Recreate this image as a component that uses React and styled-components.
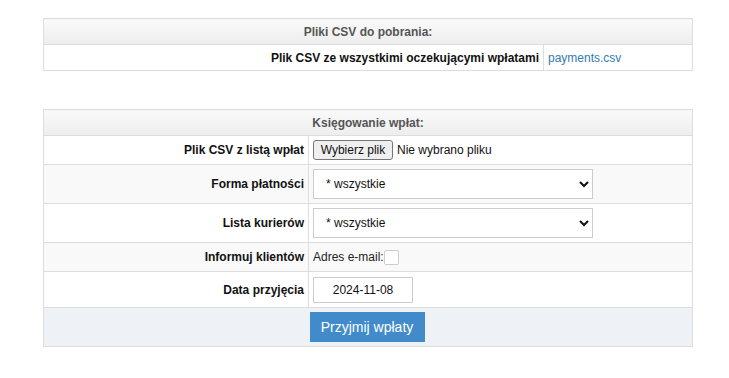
import React, { useState } from 'react';
import styled, { createGlobalStyle } from 'styled-components';

const GlobalStyle = createGlobalStyle`
  body {
    margin: 0;
    background: #ffffff;
    font-family: 'Liberation Sans', Arial, sans-serif;
    font-size: 12px;
    color: #222;
  }
`;

const Page = styled.div`
  padding: 18px 0 0 43px;
  display: flex;
  flex-direction: column;
  gap: 38px;
`;

const Table = styled.table`
  width: 650px;
  border-collapse: collapse;
  table-layout: fixed;
  border: 1px solid #ddd;
`;

const HeadCell = styled.th`
  height: 25px;
  padding: 0;
  border: 1px solid #ddd;
  background: linear-gradient(to bottom, #fafafa 0%, #ededed 100%);
  color: #555;
  font-weight: bold;
  font-size: 12px;
  text-align: center;
`;

const Row = styled.tr`
  height: ${(p) => p.$h}px;
  background: ${(p) => (p.$striped ? '#f9f9f9' : '#ffffff')};
`;

const Label = styled.td`
  padding: 0 4px 0 0;
  border: 1px solid #ddd;
  text-align: right;
  font-weight: bold;
  color: #111;
  vertical-align: middle;
`;

const Value = styled.td`
  padding: 0 0 0 4px;
  border: 1px solid #ddd;
  text-align: left;
  vertical-align: middle;
`;

const Link = styled.a`
  color: #337ab7;
  text-decoration: none;
`;

const FileRow = styled.div`
  display: flex;
  align-items: center;
  gap: 4px;
  font-size: 12px;
  color: #111;
`;

const FileButton = styled.button`
  width: 80px;
  height: 20px;
  padding: 0;
  background: #efefef;
  border: 1px solid #767676;
  border-radius: 3px;
  font-family: 'Liberation Sans', Arial, sans-serif;
  font-size: 12px;
  color: #111;
`;

const Select = styled.select`
  width: 280px;
  height: 30px;
  padding: 0 8px;
  border: 1px solid #ccc;
  border-radius: 0;
  background: #fff;
  font-family: 'Liberation Sans', Arial, sans-serif;
  font-size: 12px;
  color: #111;
`;

const Inline = styled.label`
  display: flex;
  align-items: center;
  font-size: 12px;
`;

const Check = styled.span`
  width: 13px;
  height: 13px;
  border: 1px solid #ccc;
  border-radius: 2px;
  background: #fff;
`;

const DateInput = styled.input`
  box-sizing: border-box;
  width: 100px;
  height: 26px;
  border: 1px solid #ccc;
  text-align: center;
  font-family: 'Liberation Sans', Arial, sans-serif;
  font-size: 12px;
  color: #111;
`;

const FooterRow = styled.tr`
  height: 39px;
  background: #eef1f6;
`;

const FooterCell = styled.td`
  padding: 0 0 0 ${(p) => p.$pad || 0}px;
  border-top: 1px solid #ddd;
  vertical-align: middle;
`;

const Submit = styled.button`
  width: 115px;
  height: 30px;
  border: none;
  background: #428bca;
  color: #fff;
  font-family: 'Liberation Sans', Arial, sans-serif;
  font-size: 14px;
`;

export default function App() {
  const [date, setDate] = useState('2024-11-08');

  return (
    <>
      <GlobalStyle />
      <Page>
        <Table>
          <colgroup>
            <col style={{ width: 500 }} />
            <col />
          </colgroup>
          <thead>
            <tr>
              <HeadCell colSpan={2}>Pliki CSV do pobrania:</HeadCell>
            </tr>
          </thead>
          <tbody>
            <Row $h={26}>
              <Label>Plik CSV ze wszystkimi oczekującymi wpłatami</Label>
              <Value>
                <Link href="#">payments.csv</Link>
              </Value>
            </Row>
          </tbody>
        </Table>

        <Table>
          <colgroup>
            <col style={{ width: 265 }} />
            <col />
          </colgroup>
          <thead>
            <tr>
              <HeadCell colSpan={2}>Księgowanie wpłat:</HeadCell>
            </tr>
          </thead>
          <tbody>
            <Row $h={29}>
              <Label>Plik CSV z listą wpłat</Label>
              <Value>
                <FileRow>
                  <FileButton type="button">Wybierz plik</FileButton>
                  <span>Nie wybrano pliku</span>
                </FileRow>
              </Value>
            </Row>
            <Row $h={39} $striped>
              <Label>Forma płatności</Label>
              <Value>
                <Select defaultValue="all">
                  <option value="all">* wszystkie</option>
                </Select>
              </Value>
            </Row>
            <Row $h={39}>
              <Label>Lista kurierów</Label>
              <Value>
                <Select defaultValue="all">
                  <option value="all">* wszystkie</option>
                </Select>
              </Value>
            </Row>
            <Row $h={29} $striped>
              <Label>Informuj klientów</Label>
              <Value>
                <Inline>
                  Adres e-mail:
                  <Check />
                </Inline>
              </Value>
            </Row>
            <Row $h={36}>
              <Label>Data przyjęcia</Label>
              <Value>
                <DateInput value={date} onChange={(e) => setDate(e.target.value)} />
              </Value>
            </Row>
            <FooterRow>
              <FooterCell />
              <FooterCell $pad={1}>
                <Submit type="button">Przyjmij wpłaty</Submit>
              </FooterCell>
            </FooterRow>
          </tbody>
        </Table>
      </Page>
    </>
  );
}
